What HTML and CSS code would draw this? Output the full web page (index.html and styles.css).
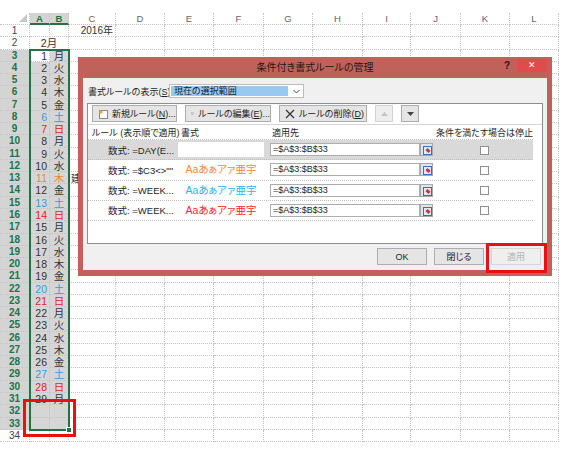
FILE: index.html
```html
<!DOCTYPE html>
<html>
<head>
    <title>条件付き書式ルールの管理</title>
    <link rel="stylesheet" href="styles.css">
</head>
<body>
    <div class="screen">
        <div class="sheet" id="sheet"></div>
        <div class="selection"><span class="fill-handle"></span></div>
        <div class="mark mark-cells"></div>

        <div class="dialog">
            <div class="titlebar">
                <span class="title">条件付き書式ルールの管理</span>
                <span class="help">?</span>
                <span class="close">✕</span>
            </div>
            <div class="dlg-body">
                <div class="scope-row">
                    <span class="scope-label">書式ルールの表示(<u>S</u>):</span>
                    <div class="select">
                        <span class="select-value">現在の選択範囲</span>
                        <span class="select-arrow">
                            <svg width="7" height="5" viewBox="0 0 7 5"><path d="M0.5 1 L3.5 4 L6.5 1" fill="none" stroke="#444" stroke-width="1"/></svg>
                        </span>
                    </div>
                </div>

                <div class="panel">
                    <div class="toolbar">
                        <button class="tool tool-new">
                            <svg width="10" height="10" viewBox="0 0 10 10"><rect x="1.5" y="1.5" width="8" height="8" fill="#fff" stroke="#8a8a8a"/><path d="M3 0.5 L3.8 2.2 L5.5 3 L3.8 3.8 L3 5.5 L2.2 3.8 L0.5 3 L2.2 2.2 Z" fill="#f0a020"/></svg>
                            <span>新規ルール(<u>N</u>)...</span>
                        </button>
                        <button class="tool tool-edit">
                            <svg width="12" height="11" viewBox="0 0 12 11"><rect x="0.5" y="0.5" width="8" height="9" fill="#fff" stroke="#7a8aa8"/><path d="M2 3h5M2 5h5M2 7h3" stroke="#4a78c0"/><path d="M5.5 9.5 L11 4" stroke="#e0902a" stroke-width="2"/><path d="M4 11 L4.8 9 L6 10.2 Z" fill="#333"/></svg>
                            <span>ルールの編集(<u>E</u>)...</span>
                        </button>
                        <button class="tool tool-delete">
                            <svg width="10" height="10" viewBox="0 0 10 10"><path d="M1 1L9 9M9 1L1 9" stroke="#333" stroke-width="1.2"/></svg>
                            <span>ルールの削除(<u>D</u>)</span>
                        </button>
                        <button class="tool tool-arrow disabled">
                            <svg width="7" height="4" viewBox="0 0 7 4"><path d="M0 4 L3.5 0 L7 4 Z" fill="#c4c4c4"/></svg>
                        </button>
                        <button class="tool tool-arrow down">
                            <svg width="7" height="4" viewBox="0 0 7 4"><path d="M0 0 L3.5 4 L7 0 Z" fill="#444"/></svg>
                        </button>
                    </div>

                    <div class="list">
                        <div class="list-head">
                            <span class="col-rule">ルール (表示順で適用)</span>
                            <span class="col-format">書式</span>
                            <span class="col-range">適用先</span>
                            <span class="col-stop">条件を満たす場合は停止</span>
                        </div>

                        <div class="rule selected">
                            <span class="col-rule">数式: =DAY(E...</span>
                            <span class="col-format"><span class="preview blank"></span></span>
                            <span class="col-range"><span class="range-box">=$A$3:$B$33</span><span class="range-btn"></span></span>
                            <span class="col-stop"><span class="check"></span></span>
                        </div>
                        <div class="rule">
                            <span class="col-rule">数式: =$C3&lt;&gt;""</span>
                            <span class="col-format"><span class="preview orange">Aaあぁアァ亜宇</span></span>
                            <span class="col-range"><span class="range-box">=$A$3:$B$33</span><span class="range-btn"></span></span>
                            <span class="col-stop"><span class="check"></span></span>
                        </div>
                        <div class="rule">
                            <span class="col-rule">数式: =WEEK...</span>
                            <span class="col-format"><span class="preview blue">Aaあぁアァ亜宇</span></span>
                            <span class="col-range"><span class="range-box">=$A$3:$B$33</span><span class="range-btn"></span></span>
                            <span class="col-stop"><span class="check"></span></span>
                        </div>
                        <div class="rule">
                            <span class="col-rule">数式: =WEEK...</span>
                            <span class="col-format"><span class="preview red">Aaあぁアァ亜宇</span></span>
                            <span class="col-range"><span class="range-box">=$A$3:$B$33</span><span class="range-btn"></span></span>
                            <span class="col-stop"><span class="check"></span></span>
                        </div>
                    </div>
                </div>

                <div class="actions">
                    <button class="btn">OK</button>
                    <button class="btn">閉じる</button>
                    <button class="btn disabled">適用</button>
                </div>
            </div>
            <div class="mark mark-apply"></div>
        </div>
    </div>

    <script>
        const sheet = document.getElementById('sheet');
        const letters = ['A', 'B', 'C', 'D', 'E', 'F', 'G', 'H', 'I', 'J', 'K', 'L'];
        const week = ['月', '火', '水', '木', '金', '土', '日'];

        function cell(text, cls) {
            const d = document.createElement('div');
            d.className = 'cell ' + (cls || '');
            d.textContent = text;
            sheet.appendChild(d);
            return d;
        }

        function dayClass(day) {
            if (day === 11) return ' hol';
            if (day % 7 === 6) return ' sat';
            if (day % 7 === 0) return ' sun';
            return '';
        }

        // column headers
        cell('', 'corner');
        letters.forEach((l, i) => cell(l, 'col-head' + (i < 2 ? ' active' : '')));

        for (let r = 1; r <= 34; r++) {
            const inSel = r >= 3 && r <= 33;
            cell(r, 'row-head' + (inSel ? ' active' : ''));

            if (r === 2) {
                cell('2月', 'merge');
            } else {
                const day = r - 2;
                const hasDay = r >= 3 && r <= 31;
                const type = hasDay ? dayClass(day) : '';
                const sel = inSel ? ' sel' : '';
                cell(hasDay ? day : '', 'num' + type + (r === 3 ? '' : sel));
                cell(hasDay ? week[(day - 1) % 7] : '', 'center' + type + sel);
            }

            if (r === 1) cell('2016年', 'num year');
            else if (r === 13) cell('建国記念の日', '');
            else cell('', '');

            for (let c = 3; c < letters.length; c++) cell('', '');
        }
    </script>
</body>
</html>
```

FILE: styles.css
```css
* {
    box-sizing: border-box;
}
body {
    margin: 0;
    background: #fff;
    font-family: "Liberation Sans", "Noto Sans CJK JP", sans-serif;
}
.screen {
    position: relative;
    width: 567px;
    height: 451px;
    overflow: hidden;
}

/* spreadsheet */
.sheet {
    display: grid;
    grid-template-columns: 30px 20px 19px 47px 49px 49px 50px 49px 50px 48px 50px 49px 49px;
    grid-template-rows: 12px repeat(34, 12.27px);
    margin-top: 13px;
    font-size: 10.5px;
}
.cell {
    border-right: 1px dotted #c4c4c4;
    border-bottom: 1px dotted #c4c4c4;
    line-height: 12px;
    padding: 0 2px;
    white-space: nowrap;
    color: #333;
}
.corner {
    position: relative;
}
.corner::after {
    content: "";
    position: absolute;
    right: 2px;
    bottom: 2px;
    border-left: 8px solid transparent;
    border-bottom: 8px solid #c8c8c8;
}
.col-head {
    text-align: center;
    font-size: 9.5px;
    line-height: 11px;
    color: #666;
}
.col-head.active {
    background: #d4d4d4;
    color: #217346;
    font-weight: bold;
    border-bottom: 2px solid #217346;
}
.row-head {
    text-align: center;
    font-size: 10px;
    color: #444;
}
.row-head.active {
    background: #d4d4d4;
    color: #217346;
    font-weight: bold;
}
.num {
    text-align: right;
}
.center {
    text-align: center;
}
.merge {
    grid-column: span 2;
    text-align: center;
}
.year {
    font-size: 10px;
}
.sel {
    background: #d6d6d6;
}
.sat {
    color: #3a9ad9;
}
.sun {
    color: #e0242a;
}
.hol {
    color: #e8873a;
}
.selection {
    position: absolute;
    left: 29px;
    top: 49px;
    width: 41px;
    height: 382px;
    border: 2px solid #217346;
}
.fill-handle {
    position: absolute;
    right: -4px;
    bottom: -4px;
    width: 6px;
    height: 6px;
    background: #217346;
    border: 1px solid #fff;
}
.mark {
    position: absolute;
    border: 3px solid #e81010;
}
.mark-cells {
    left: 23px;
    top: 399px;
    width: 53px;
    height: 38px;
}

/* dialog */
.dialog {
    position: absolute;
    left: 78px;
    top: 57px;
    width: 474px;
    height: 219px;
    background: #c0625a;
    padding: 0 5px 6px;
    display: flex;
    flex-direction: column;
    font-size: 9px;
    font-feature-settings: "palt";
    white-space: nowrap;
    color: #1e1e1e;
}
.titlebar {
    height: 21px;
    display: flex;
    align-items: flex-start;
    padding-left: 50px;
    flex-shrink: 0;
}
.title {
    flex: 1;
    text-align: center;
    font-size: 10px;
    line-height: 22px;
    color: #2a1614;
}
.help {
    width: 20px;
    text-align: center;
    font-weight: bold;
    font-size: 10px;
    line-height: 17px;
    color: #2a1614;
}
.close {
    width: 30px;
    height: 13px;
    margin-top: 2px;
    background: #e04b4b;
    color: #fff;
    text-align: center;
    line-height: 13px;
    font-size: 9px;
}
.dlg-body {
    flex: 1;
    background: #f0f0f0;
    padding: 6px 4px 0;
}
.scope-row {
    display: flex;
    align-items: center;
    height: 14px;
}
.scope-label {
    width: 82px;
    padding-left: 1px;
}
.select {
    width: 135px;
    height: 14px;
    border: 1px solid #bcbcbc;
    background: #fff;
    display: flex;
}
.select-value {
    flex: 1;
    margin: 1px;
    padding-left: 3px;
    background: #99c9f0;
    line-height: 10px;
    color: #10243c;
}
.select-arrow {
    width: 14px;
    display: flex;
    align-items: center;
    justify-content: center;
}
.panel {
    margin-top: 5px;
    height: 141px;
    border: 1px solid #8a8d9a;
    background: #fff;
}
.toolbar {
    display: flex;
    gap: 8px;
    height: 21px;
    padding: 1px 4px 0;
    border-bottom: 1px solid #d4d4d4;
}
.tool {
    height: 17px;
    border: 1px solid #adadad;
    background: #e5e5e5;
    display: flex;
    align-items: center;
    gap: 4px;
    padding: 0 0 0 5px;
    font: inherit;
    color: inherit;
    white-space: nowrap;
}
.tool-new {
    width: 85px;
}
.tool-edit {
    width: 86px;
}
.tool-delete {
    width: 88px;
}
.tool-arrow {
    width: 18px;
    padding: 0;
    justify-content: center;
}
.tool-arrow.disabled {
    border-color: #d2d2d2;
    background: #eeeeee;
}
.list {
    width: 445px;
}
.list-head,
.rule {
    display: grid;
    grid-template-columns: 90px 90px 168px 97px;
    align-items: center;
    border-bottom: 1px dotted #c0c0c0;
}
.list-head {
    height: 15px;
}
.list-head .col-rule {
    padding-left: 4px;
}
.list-head .col-format {
    padding-left: 3px;
}
.list-head .col-range {
    padding-left: 4px;
}
.col-stop {
    text-align: center;
}
.rule {
    height: 20.25px;
}
.rule.selected {
    background: #d9d9d9;
}
.rule .col-rule {
    padding-left: 20px;
    font-size: 9.5px;
    overflow: hidden;
}
.preview {
    display: block;
    width: 86px;
    height: 15px;
    line-height: 15px;
    text-align: center;
    font-size: 10.5px;
}
.preview.blank {
    background: #fff;
}
.orange {
    color: #f3883e;
}
.blue {
    color: #2fb4f0;
}
.red {
    color: #ff2828;
}
.rule .col-range {
    display: flex;
    align-items: center;
    padding-left: 2px;
}
.range-box {
    width: 150px;
    height: 13px;
    border: 1px solid #abadb3;
    background: #fff;
    padding-left: 2px;
    line-height: 11px;
}
.range-btn {
    width: 13px;
    height: 13px;
    border: 1px solid #a8a8a8;
    background: #e4e4e4;
    position: relative;
}
.range-btn::before {
    content: "";
    position: absolute;
    left: 2px;
    top: 2px;
    width: 7px;
    height: 7px;
    border: 1px solid #3d6db5;
    background: #dfe9f7;
}
.range-btn::after {
    content: "";
    position: absolute;
    left: 5px;
    top: 5px;
    width: 4px;
    height: 3px;
    background: #d2302a;
    transform: rotate(40deg);
}
.check {
    display: inline-block;
    width: 9px;
    height: 9px;
    border: 1px solid #8f8f8f;
    background: #fff;
    vertical-align: middle;
}
.actions {
    display: flex;
    justify-content: flex-end;
    gap: 7px;
    margin-top: 4px;
    padding-right: 2px;
}
.btn {
    width: 50px;
    height: 17px;
    border: 1px solid #adadad;
    background: #e5e5e5;
    font: inherit;
    color: inherit;
    padding: 0;
}
.btn.disabled {
    color: #b4b4b4;
    border-color: #d6d6d6;
    background: #efefef;
}
.mark-apply {
    left: 408px;
    top: 186px;
    width: 61px;
    height: 30px;
}
```
